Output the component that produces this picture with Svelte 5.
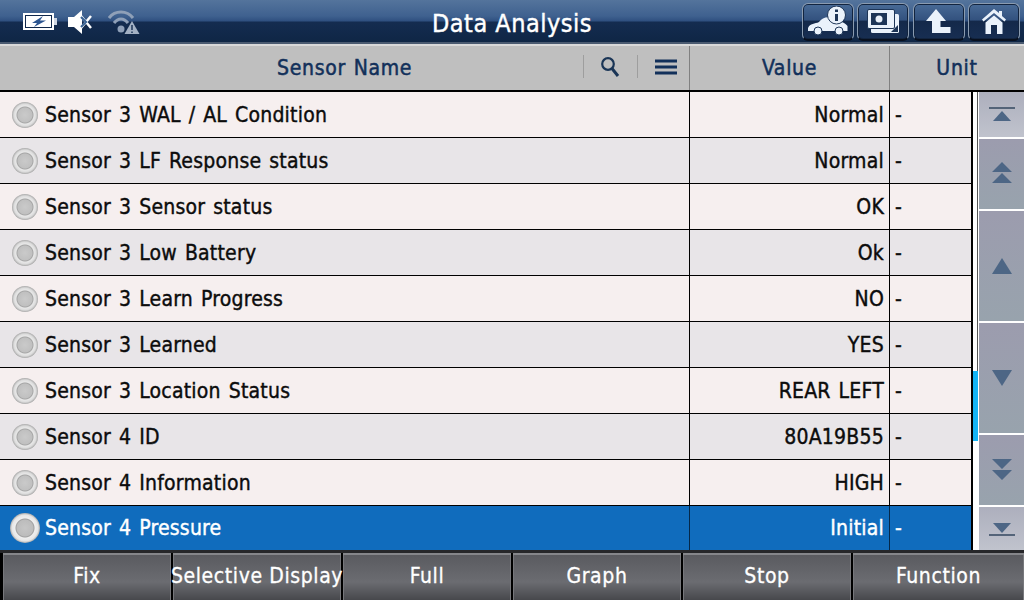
<script>
	const rows = [
		{ name: 'Sensor 3 WAL / AL Condition', value: 'Normal' },
		{ name: 'Sensor 3 LF Response status', value: 'Normal' },
		{ name: 'Sensor 3 Sensor status', value: 'OK' },
		{ name: 'Sensor 3 Low Battery', value: 'Ok' },
		{ name: 'Sensor 3 Learn Progress', value: 'NO' },
		{ name: 'Sensor 3 Learned', value: 'YES' },
		{ name: 'Sensor 3 Location Status', value: 'REAR LEFT' },
		{ name: 'Sensor 4 ID', value: '80A19B55' },
		{ name: 'Sensor 4 Information', value: 'HIGH' },
		{ name: 'Sensor 4 Pressure', value: 'Initial', active: true }
	];
	const footer = ['Fix', 'Selective Display', 'Full', 'Graph', 'Stop', 'Function'];
</script>

<div class="screen">
	<header class="topbar">
		<div class="status">
			<svg width="34" height="18" viewBox="0 0 34 18">
				<rect x="1" y="1" width="29" height="15" fill="#fff" stroke="#fff" stroke-width="2" />
				<rect x="2.500" y="2.500" width="26" height="12" fill="#fff" stroke="#10284c" stroke-width="1" />
				<rect x="31" y="5" width="3" height="7" fill="#cfd6e2" />
				<path d="M20 3 L9 10 H14 L11 14 L23 7.500 H17 Z" fill="#2c5590" />
			</svg>
			<svg width="25" height="26" viewBox="0 0 25 26">
				<path d="M0 8 H6 L14 1 V25 L6 18 H0 Z" fill="#fff" />
				<path d="M13 7 L23 19 M23 7 L13 19" stroke="#fff" stroke-width="2.500" />
				<path d="M13 8 L18 13 L13 18" stroke="#3c6494" stroke-width="2.200" fill="none" />
			</svg>
			<svg width="32" height="26" viewBox="0 0 32 26">
				<path d="M1 9 C7 1 19 1 25 9" stroke="#8fa0b8" stroke-width="3" fill="none" />
				<path d="M6 14 C10 8.500 16 8.500 20 14" stroke="#8fa0b8" stroke-width="3" fill="none" />
				<circle cx="13" cy="20" r="3.500" fill="#8fa0b8" />
				<path d="M24 12 L31.500 25 H16.500 Z" fill="#a3b1c4" />
				<path d="M24 16 V21 M24 22.500 V24" stroke="#1d3557" stroke-width="1.500" />
			</svg>
		</div>
		<h1>Data Analysis</h1>
		<nav class="tools">
			<button aria-label="Vehicle info">
				<svg width="40" height="30" viewBox="0 0 40 30">
					<path d="M0 22 C2 17 7 18 11 16 C14 12 19 10 24 12 C30 15 37 16 39.500 20 V25 H0 Z" fill="#eaf2fb" />
					<circle cx="10" cy="25" r="4" fill="#eaf2fb" stroke="#1d3557" />
					<circle cx="31" cy="25" r="4" fill="#eaf2fb" stroke="#1d3557" />
					<circle cx="28.500" cy="9" r="9" fill="#eaf2fb" stroke="#1d3557" stroke-width="1" />
					<path d="M28.500 3.500 V6 M28.500 8 V15" stroke="#1d3557" stroke-width="3" />
				</svg>
			</button>
			<button aria-label="Screenshots">
				<svg width="32" height="24" viewBox="0 0 32 24">
					<rect x="4" y="5" width="28" height="19" rx="1.500" fill="#eaf2fb" />
					<rect x="0.500" y="0.500" width="27" height="19" rx="1.500" fill="#eaf2fb" stroke="#1d3557" stroke-width="1" />
					<rect x="4" y="4" width="16" height="12" fill="#1d3557" />
					<circle cx="12" cy="10" r="3.500" fill="#eaf2fb" />
					<path d="M24 23 L31 16 V23 Z" fill="#1d3557" />
				</svg>
			</button>
			<button aria-label="Up">
				<svg width="25" height="24" viewBox="0 0 25 24">
					<path d="M10 0 L20 12 H14.500 V18 H24.500 V24 H6 V12 H0 Z" fill="#eaf2fb" />
				</svg>
			</button>
			<button aria-label="Home">
				<svg width="24" height="25" viewBox="0 0 24 25">
					<path d="M12 0 L17 4 V2 H20 V7 L24 10.500 L22.500 12.500 L12 4 L1.500 12.500 L0 10.500 Z" fill="#eaf2fb" />
					<path d="M12 6.500 L20.500 13.500 V25 H15 V16 H9 V25 H3.500 V13.500 Z" fill="#eaf2fb" />
				</svg>
			</button>
		</nav>
	</header>

	<div class="thead">
		<div class="th name">
			<span class="sensor-title">Sensor Name</span>
			<div class="th-tools">
				<div class="th-tool">
					<svg width="20" height="24" viewBox="0 0 20 24">
						<circle cx="8" cy="9" r="5.800" fill="none" stroke="#1a3556" stroke-width="2.200" />
						<path d="M12 13.500 L18 21" stroke="#1a3556" stroke-width="3" />
					</svg>
				</div>
				<div class="th-tool">
					<svg width="22" height="16" viewBox="0 0 22 16">
						<path d="M0 2 H22 M0 8 H22 M0 14 H22" stroke="#12305a" stroke-width="3" />
					</svg>
				</div>
			</div>
		</div>
		<div class="th value">Value</div>
		<div class="th unit">Unit</div>
	</div>

	<main class="body">
		<div class="rows">
			{#each rows as row, i}
				<div class="row" class:alt={i % 2 === 1} class:active={row.active}>
					<div class="cell name">
						<span class="led"></span>
						<span>{row.name}</span>
					</div>
					<div class="cell value">{row.value}</div>
					<div class="cell unit">-</div>
				</div>
			{/each}
		</div>
		<div class="track">
			<span class="rail"></span>
			<span class="thumb"></span>
		</div>
		<div class="scroller">
			<button class="end" style="height: 45px" aria-label="First">
				<svg width="26" height="16" viewBox="0 0 26 16"><path d="M0 1 H26" stroke="#33475f" stroke-width="1.500" /><path d="M13 4 L22 14 H4 Z" fill="#4d6685" /></svg>
			</button>
			<button class="pager" style="height: 70px" aria-label="Page up">
				<svg width="20" height="22" viewBox="0 0 20 22"><path d="M10 0 L20 10 H0 Z M10 11 L20 21 H0 Z" fill="#4d6685" /></svg>
			</button>
			<button style="height: 110px" aria-label="Up">
				<svg width="20" height="16" viewBox="0 0 20 16"><path d="M10 0 L20 16 H0 Z" fill="#4d6685" /></svg>
			</button>
			<button style="height: 110px" aria-label="Down">
				<svg width="20" height="16" viewBox="0 0 20 16"><path d="M0 0 H20 L10 16 Z" fill="#4d6685" /></svg>
			</button>
			<button style="height: 70px" aria-label="Page down">
				<svg width="20" height="22" viewBox="0 0 20 22"><path d="M0 0 H20 L10 10 Z M0 11 H20 L10 21 Z" fill="#4d6685" /></svg>
			</button>
			<button class="end" style="height: 43px" aria-label="Last">
				<svg width="26" height="14" viewBox="0 0 26 14"><path d="M4 1 H22 L13 11 Z" fill="#4d6685" /><path d="M0 13 H26" stroke="#33475f" stroke-width="1.500" /></svg>
			</button>
		</div>
	</main>

	<footer class="actions">
		{#each footer as label}
			<button>{label}</button>
		{/each}
	</footer>
</div>

<style>
	:global(body) {
		margin: 0;
		background: #000;
	}

	.screen {
		width: 1024px;
		height: 600px;
		display: flex;
		flex-direction: column;
		overflow: hidden;
		font-family: "DejaVu Sans", sans-serif;
		font-stretch: condensed;
	}

	button {
		padding: 0;
		font: inherit;
		display: flex;
		align-items: center;
		justify-content: center;
	}

	.topbar {
		height: 44px;
		flex: none;
		display: flex;
		align-items: center;
		position: relative;
		box-sizing: border-box;
		border-bottom: 2px solid #4a5a70;
		background: linear-gradient(#54749c 0, #3f618f 16px, #2f5080 21px, #142c50 22px, #0f2645 100%);
	}

	.status {
		display: flex;
		align-items: center;
		gap: 13px;
		padding: 1px 0 0 23px;
	}

	.status svg:nth-child(2) {
		margin-left: -2px;
	}

	.status svg:nth-child(3) {
		margin-left: 2px;
	}

	h1 {
		margin: 0;
		position: absolute;
		left: 432px;
		top: 8px;
		font-size: 25px;
		line-height: 32px;
		font-weight: 400;
		color: #fff;
		letter-spacing: 0.5px;
		-webkit-text-stroke: 0.4px #fff;
	}

	.tools {
		margin-left: auto;
		display: flex;
		gap: 3.500px;
		padding: 1px 4px 0 0;
	}

	.tools button {
		width: 52px;
		height: 38px;
		box-sizing: border-box;
		border: 1px solid #8a9bb0;
		border-bottom: 2px solid #08101e;
		border-radius: 6px;
		box-shadow: inset 0 0 0 1px #12243f;
		background: linear-gradient(#486a96 0, #33527f 45%, #14294a 50%, #172e52 100%);
	}

	.thead {
		height: 48px;
		flex: none;
		display: flex;
		box-sizing: border-box;
		border-top: 2px solid #d9d9d9;
		border-bottom: 2px solid #000;
		background: #bfbfbf;
		color: #12305a;
		font-size: 21px;
		letter-spacing: 0.7px;
		font-weight: 400;
	}

	.th {
		display: flex;
		align-items: center;
		justify-content: center;
		box-sizing: border-box;
		border-right: 1px solid #808080;
		-webkit-text-stroke: 0.5px #12305a;
	}

	.th.name {
		width: 690px;
		position: relative;
	}

	.sensor-title {
		position: absolute;
		left: 277px;
		word-spacing: 1px;
	}

	.th-tools {
		position: absolute;
		left: 583px;
		top: 9px;
		right: 0;
		display: flex;
	}

	.th-tool {
		height: 23px;
		box-sizing: border-box;
		border-left: 1px solid #9e9e9e;
		display: flex;
		align-items: center;
		justify-content: center;
	}

	.th-tool:first-child {
		width: 54px;
		padding-right: 2px;
	}

	.th-tool:last-child {
		flex: 1;
		padding-left: 4px;
	}

	.th.value {
		width: 200px;
	}

	.th.unit {
		flex: 1;
		border-right: 0;
	}

	.body {
		flex: 1;
		min-height: 0;
		display: flex;
		background: #fff;
	}

	.rows {
		width: 971px;
		flex: none;
		border-right: 2px solid #000;
	}

	.row {
		height: 46px;
		box-sizing: border-box;
		display: flex;
		background: #f6efef;
		border-bottom: 1px solid #000;
		font-size: 21px;
		letter-spacing: 0.22px;
		word-spacing: 1.700px;
		color: #0c0c0c;
		-webkit-text-stroke: 0.4px #0c0c0c;
	}

	.row.alt {
		background: #e8e5e8;
	}

	.row.active {
		height: 44px;
		border-bottom: 0;
		background: #106cbd;
		color: #fff;
		-webkit-text-stroke: 0.4px #fff;
	}

	.cell {
		display: flex;
		align-items: center;
		box-sizing: border-box;
		border-right: 1px solid #000;
	}

	.cell.name {
		width: 690px;
		padding-left: 12px;
		gap: 7px;
	}

	.cell.value {
		width: 200px;
		justify-content: flex-end;
		padding-right: 5px;
	}

	.cell.unit {
		flex: 1;
		border-right: 0;
		padding-left: 5px;
	}

	.row.active .cell {
		border-right-color: #04284a;
	}

	.led {
		width: 26px;
		height: 26px;
		flex: none;
		border-radius: 50%;
		background: radial-gradient(circle at 50% 50%, #cacaca 0, #c0c0c0 7px, #a6a6a6 8px, #e8e8e8 9px, #dcdcdc 11px, #a8a8a8 13px);
	}

	.row.active .led {
		width: 30px;
		height: 30px;
		margin: 0 -2px;
		background: radial-gradient(circle at 50% 50%, #c6c6c6 0, #bcbcbc 8px, #a0a0a0 9px, #efefef 10px, #e6e6e6 13px, #aaa 15px);
	}

	.track {
		width: 6px;
		flex: none;
		display: flex;
		flex-direction: column;
		background: #fff;
	}

	.rail {
		height: 279px;
		width: 5px;
		box-sizing: border-box;
		border-right: 1px solid #555;
	}

	.thumb {
		width: 5px;
		height: 70px;
		background: #14b4f5;
	}

	.scroller {
		flex: 1;
		display: flex;
		flex-direction: column;
		gap: 2px;
		background: #fff;
	}

	.scroller button {
		border: 0;
		background: linear-gradient(#9c9cae, #98a3ad);
	}

	.scroller button.end {
		background: linear-gradient(#adafbd, #c0c3cd);
	}

	.scroller button.pager {
		padding-bottom: 3px;
	}

	.actions {
		height: 50px;
		flex: none;
		display: flex;
		box-sizing: border-box;
		padding: 3px 0 0 3px;
		gap: 2px;
		background: linear-gradient(#26272a 0, #26272a 3px, #000 3px);
	}

	.actions button {
		flex: 0 0 168px;
		min-width: 0;
		border: 0;
		border-top: 2px solid #85868a;
		box-shadow: inset 1px 0 #77787c, inset -1px 0 #77787c;
		white-space: nowrap;
		color: #fff;
		font-size: 21px;
		letter-spacing: 0.6px;
		-webkit-text-stroke: 0.3px #fff;
		padding-bottom: 4px;
		background: linear-gradient(#5a5b60 0, #6b6c71 60%, #47484c 100%);
	}

	.actions button:last-child {
		flex: 1;
	}
</style>
